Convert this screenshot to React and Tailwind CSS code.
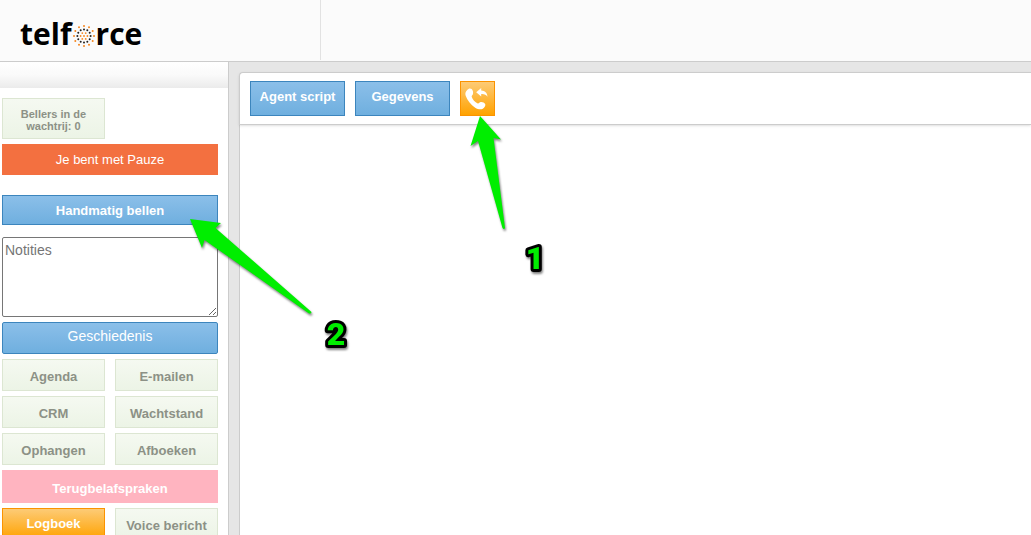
import React, { useState } from 'react';

const BLUE = 'border border-[#3c85bd] bg-linear-to-b from-[#8bbfe9] to-[#6fafdf] text-white';
const GREEN = 'border border-[#dce6d2] bg-linear-to-b from-[#f5f9f1] to-[#ecf4e6] text-[#8c9186]';
const ORANGE = 'border border-[#fb9300] bg-linear-to-b/srgb from-[#fdcb76] to-[#ffa200] text-white';

const tools = ['Agenda', 'E-mailen', 'CRM', 'Wachtstand', 'Ophangen', 'Afboeken'];

// dots of the logo: [number of dots, radius, size, colour]
const rings = [
  [12, 10, 1, '#f5861f'],
  [12, 6.6, 1, '#222222'],
  [6, 3.4, 0.9, '#f5861f'],
  [1, 0, 0.9, '#f5861f'],
];

const DotRing = () => (
  <svg width="24" height="24" viewBox="-12 -12 24 24" aria-hidden="true">
    {rings.map(([count, radius, size, color]) =>
      Array.from({ length: count }, (_, i) => {
        const a = ((i + (count === 6 ? 0.5 : 0)) / count) * Math.PI * 2;
        return (
          <circle key={`${radius}-${i}`} cx={Math.sin(a) * radius} cy={-Math.cos(a) * radius} r={size} fill={color} />
        );
      })
    )}
  </svg>
);

const Logo = () => (
  <a href="#" aria-label="telforce" className="flex items-center pl-5 font-['Open_Sans',sans-serif] text-3xl font-bold text-black">
    <span>telf</span>
    <span className="pt-1"><DotRing /></span>
    <span>rce</span>
  </a>
);

const CallbackIcon = () => (
  <svg width="25" height="25" viewBox="0 0 25 25" fill="white" aria-hidden="true">
    <path d="M2.2 4.1C3.3 2.5 5.4 2.1 6.7 3.1C8 4.4 8.5 6.8 7.8 8.5C7.4 9.5 6.5 9.7 6.7 10.7C7.5 13.6 10 16.3 12.8 17.4C13.9 17.6 14.2 16.5 15.1 16.2C17 15.6 19.3 16.6 20.2 18.1C20.8 19.7 19.6 21.7 17.8 22.8C15.6 23.9 12.6 23.2 10.2 21.7C5.8 18.9 2.2 14.1 .6 9.6C0 7.5 .6 5.5 2.2 4.1Z" />
    <path d="M11.2 6.2L16.2 1.9V4.4C19.9 4.5 22.3 6.6 22.5 10.8C21.1 8.6 19.2 7.9 16.2 8.1V10.6Z" />
  </svg>
);

const Sidebar = () => {
  const [notes, setNotes] = useState('');

  return (
    <aside className="w-[229px] shrink-0 border-r border-[#cccccc] bg-white">
      <div className="h-[26px] bg-linear-to-b from-white via-[#fafafa] to-[#ebebeb]" />
      <div className="flex flex-col pt-2.5 pr-2.5 pl-0.5 text-[13px] font-bold">
        <button className={`h-[41px] w-[103px] px-3 pt-[3px] text-[11px] leading-3 ${GREEN}`}>
          Bellers in de wachtrij: 0
        </button>
        <button className="mt-[5px] h-[31px] bg-[#f37040] font-normal text-white">Je bent met Pauze</button>
        <button className={`mt-5 h-[30px] pt-0.5 ${BLUE}`}>Handmatig bellen</button>
        <textarea
          aria-label="Notities"
          placeholder="Notities"
          value={notes}
          onChange={(e) => setNotes(e.target.value)}
          className="mt-3 h-20 resize rounded-xs border border-[#767676] bg-white p-0.5 text-sm font-normal text-black placeholder:text-[#757575]"
        />
        <button className={`mt-[5px] h-8 rounded-xs pb-1 text-sm font-normal ${BLUE}`}>Geschiedenis</button>
        <div className="mt-[5px] grid grid-cols-2 gap-x-2.5 gap-y-[5px]">
          {tools.map((name) => (
            <button key={name} className={`h-8 pt-1 ${GREEN}`}>{name}</button>
          ))}
          <button className="col-span-2 h-[33px] bg-[#ffb4c0] pt-1 text-white">Terugbelafspraken</button>
          <button className={`h-8 ${ORANGE}`}>Logboek</button>
          <button className={`h-8 pt-1 ${GREEN}`}>Voice bericht</button>
        </div>
      </div>
    </aside>
  );
};

// Numbered arrows that explain the steps, drawn over the page
const Annotations = () => (
  <svg
    className="pointer-events-none absolute top-0 left-0 z-20 drop-shadow-[1px_2px_1px_rgba(0,0,0,0.5)]"
    width="570"
    height="370"
    viewBox="0 0 570 370"
  >
    <g fill="#00ee00">
      <path d="M480 116L501 139.500L493.500 138L505 228Q504 230 502.500 228L478 141L470.500 146Z" />
      <path d="M190 219L221 223L215.500 228L311.500 312Q311.500 314 309 313.500L204.500 240L202 248Z" />
    </g>
    <g
      fill="#00ee00"
      stroke="black"
      strokeWidth="6"
      strokeLinejoin="round"
      paintOrder="stroke"
      className="font-[Roboto,Arial,sans-serif] text-[32px] font-black"
      textAnchor="middle"
    >
      <text x="535" y="269">1</text>
      <text x="336" y="345">2</text>
    </g>
  </svg>
);

export default function App() {
  return (
    <div className="relative flex h-screen flex-col overflow-hidden bg-[#e6e6e6] font-['Liberation_Sans',Arial,sans-serif]">
      <header className="flex h-[62px] shrink-0 border-b border-[#cccccc] bg-[#fbfbfb]">
        <div className="flex h-[60px] w-[321px] items-center border-r border-[#e2e2e2] pt-2">
          <Logo />
        </div>
      </header>
      <div className="flex min-h-0 grow">
        <Sidebar />
        <main className="flex grow flex-col pt-2.5 pl-2.5">
          <div className="z-10 flex gap-2.5 rounded-tl-sm border border-r-0 border-[#cccccc] bg-white px-2.5 pt-2 pb-2 text-[13px] font-bold shadow-sm">
            <button className={`h-[35px] w-[95px] pb-1 ${BLUE}`}>Agent script</button>
            <button className={`h-[35px] w-[95px] pb-1 ${BLUE}`}>Gegevens</button>
            <button aria-label="Terugbellen" className={`flex size-[35px] items-center justify-center ${ORANGE}`}>
              <CallbackIcon />
            </button>
          </div>
          <div className="grow border-l border-[#cccccc] bg-white" />
        </main>
      </div>
      <Annotations />
    </div>
  );
}
